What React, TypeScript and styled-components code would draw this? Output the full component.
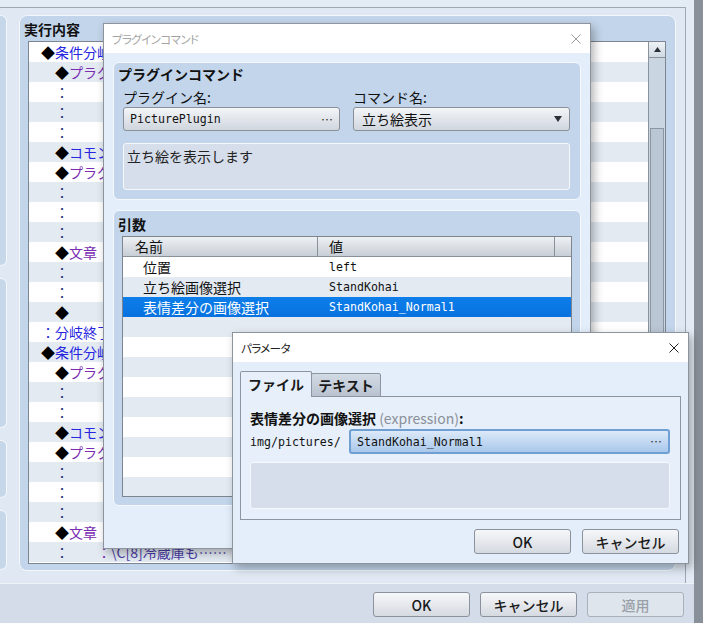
import React from "react";
import styled, { createGlobalStyle } from "styled-components";

const JP = `"Noto Sans CJK JP", "Noto Sans", sans-serif`;
const MONO = `"DejaVu Sans Mono", "Liberation Mono", "Noto Sans CJK JP", monospace`;

const NAVY = "#1e2d7d";
const BLUE = "#2626e0";
const PURPLE = "#7a2db3";

const GlobalStyle = createGlobalStyle`
  html, body { margin: 0; padding: 0; }
  body {
    font-family: ${JP};
    font-size: 14px;
    color: #1a1a1a;
  }
`;

const Screen = styled.div`
  position: relative;
  width: 703px;
  height: 623px;
  overflow: hidden;
  display: flex;
  background: #e3ebf5;
`;

const EditorWindow = styled.div`
  flex: 1;
  display: flex;
  flex-direction: column;
`;

const DarkStrip = styled.div`
  width: 9px;
  background: #8a9099;
`;

const UpperArea = styled.div`
  height: 583px;
  box-sizing: border-box;
  padding: 7px 8px 0 0;
  display: flex;
`;

const Frame = styled.div`
  flex: 1;
  box-sizing: border-box;
  border-top: 1px solid #9ea7b3;
  border-right: 1px solid #9ea7b3;
  background: #dfe8f3;
  display: flex;
  gap: 12px;
  padding: 7px 9px 12px 0;
`;

const SidePanels = styled.div`
  width: 7px;
  display: flex;
  flex-direction: column;
  gap: 12px;
`;

const SidePanel = styled.div<{ $h: number }>`
  height: ${(p) => p.$h}px;
  box-sizing: border-box;
  background: #c6d7ea;
  border: 1px solid #f3f7fc;
  border-left: none;
  border-radius: 0 6px 6px 0;
`;

const ContentsPanel = styled.div`
  flex: 1;
  box-sizing: border-box;
  background: #c3d5ea;
  border: 1px solid #f3f7fc;
  border-radius: 8px;
  padding: 3px 9px 6px 8px;
  display: flex;
  flex-direction: column;
`;

const PanelTitle = styled.div`
  font-weight: 700;
  font-size: 14px;
  line-height: 20px;
  margin: 0 0 2px -4px;
  color: #111;
`;

const CommandList = styled.div`
  flex: 1;
  display: flex;
  border: 1px solid #7d8591;
  background: #fff;
  min-height: 0;
`;

const CommandRows = styled.div`
  flex: 1;
  overflow: hidden;
`;

const CommandRow = styled.div<{ $odd: boolean; $level: number }>`
  height: 20px;
  line-height: 20px;
  white-space: nowrap;
  overflow: hidden;
  font-size: 14px;
  padding-left: ${(p) => p.$level * 14 - 2}px;
  background: ${(p) => (p.$odd ? "#ffffff" : "#e3eaf2")};
`;

const Seg = styled.span<{ $color: string }>`
  color: ${(p) => p.$color};
`;

const VScroll = styled.div`
  width: 16px;
  border-left: 1px solid #8a929c;
  background: #cad5e2;
  display: flex;
  flex-direction: column;
`;

const ScrollArrow = styled.div`
  height: 15px;
  border-bottom: 1px solid #8a929c;
  background: linear-gradient(#eef2f6, #cfd8e2);
  display: flex;
  align-items: center;
  justify-content: center;
`;

const ScrollThumb = styled.div`
  margin: 70px 1px 0 1px;
  height: 380px;
  box-sizing: border-box;
  border: 1px solid #8c96a2;
  background: #bac6d4;
`;

const BottomBar = styled.div`
  flex: 1;
  background: #d3dce8;
  border-top: 1px solid #eef3f8;
  display: flex;
  justify-content: flex-end;
  align-items: flex-start;
  gap: 10px;
  padding: 8px 10px 0 0;
`;

const PushButton = styled.div<{ $disabled?: boolean }>`
  width: 97px;
  height: 25px;
  box-sizing: border-box;
  border: 1px solid ${(p) => (p.$disabled ? "#aab1ba" : "#8c929b")};
  border-radius: 3px;
  background: ${(p) =>
    p.$disabled ? "#dfe5ec" : "linear-gradient(#f6f7f9, #d5dae1)"};
  color: ${(p) => (p.$disabled ? "#9aa0a8" : "#1a1a1a")};
  font-size: 14px;
  font-weight: 500;
  display: flex;
  align-items: center;
  justify-content: center;
  line-height: 1;
`;

const Dialog = styled.div<{ $x: number; $y: number; $w: number; $h: number }>`
  position: absolute;
  left: ${(p) => p.$x}px;
  top: ${(p) => p.$y}px;
  width: ${(p) => p.$w}px;
  height: ${(p) => p.$h}px;
  box-sizing: border-box;
  border: 1px solid #8e949c;
  background: #e4eefa;
  box-shadow: 3px 4px 9px rgba(0, 0, 0, 0.3);
  display: flex;
  flex-direction: column;
`;

const TitleBar = styled.div<{ $active?: boolean }>`
  height: 29px;
  flex: none;
  background: #ffffff;
  display: flex;
  align-items: center;
  justify-content: space-between;
  padding: 0 9px 0 8px;
  font-size: 11.5px;
  letter-spacing: -0.6px;
  font-feature-settings: "palt";
  color: ${(p) => (p.$active ? "#222" : "#a4a4a4")};
`;

const DialogBody = styled.div`
  flex: 1;
  display: flex;
  flex-direction: column;
  gap: 10px;
  padding: 9px 9px 0 9px;
`;

const GroupBox = styled.div<{ $h: number }>`
  height: ${(p) => p.$h}px;
  box-sizing: border-box;
  background: #c2d5ea;
  border: 1px solid #f5f9fd;
  border-radius: 6px;
  padding: 1px 10px 8px 9px;
  display: flex;
  flex-direction: column;
`;

const GroupTitle = styled.div<{ $mt?: number }>`
  font-weight: 700;
  font-size: 14px;
  line-height: 20px;
  margin: ${(p) => p.$mt ?? 0}px 0 0 -5px;
  color: #111;
`;

const FieldGrid = styled.div`
  display: grid;
  grid-template-columns: 217px 217px;
  column-gap: 13px;
  margin-top: 3px;
`;

const FieldLabel = styled.div`
  font-size: 14px;
  line-height: 20px;
  color: #111;
`;

const PickerField = styled.div<{ $focused?: boolean }>`
  height: ${(p) => (p.$focused ? 25 : 24)}px;
  box-sizing: border-box;
  border: ${(p) => (p.$focused ? "2px solid #6f9fd3" : "1px solid #8a9098")};
  border-radius: 3px;
  background: ${(p) =>
    p.$focused
      ? "linear-gradient(#dce9f8, #a9c8ec)"
      : "linear-gradient(#f3f5f8, #d0d6de)"};
  display: flex;
  align-items: center;
  justify-content: space-between;
  padding: 0 6px;
  font-family: ${MONO};
  font-size: 11.6px;
  color: #111;
  flex: 1;
`;

const Ellipsis = styled.span`
  font-family: ${JP};
  font-size: 12px;
  color: #333;
`;

const SelectField = styled(PickerField)`
  font-family: ${JP};
  font-size: 14px;
  padding: 0 7px 0 8px;
`;

const DescBox = styled.div<{ $mt: number }>`
  height: 47px;
  box-sizing: border-box;
  margin-top: ${(p) => p.$mt}px;
  background: #d5deea;
  border: 1px solid #f5f8fc;
  border-radius: 3px;
  padding: 2px 3px;
  font-size: 14px;
  line-height: 20px;
  color: #222;
`;

const ArgTable = styled.div`
  margin: 2px -2px 0 -1px;
  border: 1px solid #7e858f;
  background: #fff;
  flex: 1;
  overflow: hidden;
`;

const HeaderRow = styled.div`
  display: grid;
  grid-template-columns: 195px 237px 1fr;
  height: 20px;
  box-sizing: border-box;
  border-bottom: 1px solid #8a9099;
  background: linear-gradient(#eef1f4, #c8ced6);
`;

const HeaderCell = styled.div<{ $pad: number; $sep?: boolean }>`
  padding-left: ${(p) => p.$pad}px;
  border-right: ${(p) => (p.$sep ? "1px solid #8a9099" : "none")};
  font-size: 14px;
  line-height: 19px;
  color: #111;
`;

const ArgRow = styled.div<{ $tone: "white" | "gray" | "selected" }>`
  display: grid;
  grid-template-columns: 195px 1fr;
  height: 20px;
  line-height: 20px;
  background: ${(p) =>
    p.$tone === "selected"
      ? "linear-gradient(#0d7ee9, #0671df)"
      : p.$tone === "gray"
      ? "#e3eaf2"
      : "#ffffff"};
  color: ${(p) => (p.$tone === "selected" ? "#ffffff" : "#111")};
`;

const ArgName = styled.div`
  padding-left: 20px;
  font-size: 14px;
  white-space: nowrap;
`;

const ArgValue = styled.div`
  padding-left: 11px;
  font-family: ${MONO};
  font-size: 11.6px;
  white-space: nowrap;
`;

const ParamBody = styled.div`
  flex: 1;
  display: flex;
  flex-direction: column;
  padding: 9px 7px 0 7px;
`;

const TabStrip = styled.div`
  display: flex;
  align-items: flex-end;
  height: 26px;
  margin-bottom: -1px;
  position: relative;
  z-index: 1;
`;

const Tab = styled.div<{ $active?: boolean }>`
  box-sizing: border-box;
  width: ${(p) => (p.$active ? 72 : 70)}px;
  height: ${(p) => (p.$active ? 26 : 24)}px;
  border: 1px solid #8c96a2;
  border-bottom: ${(p) => (p.$active ? "none" : "1px solid #8c96a2")};
  margin-left: ${(p) => (p.$active ? 0 : -1)}px;
  border-radius: 2px 2px 0 0;
  background: ${(p) =>
    p.$active ? "#e6effa" : "linear-gradient(#d2dae4, #b9c3cf)"};
  font-size: 14px;
  font-weight: 700;
  display: flex;
  align-items: center;
  justify-content: center;
  padding-bottom: 1px;
  color: #1a1a1a;
`;

const TabPanel = styled.div`
  height: 124px;
  box-sizing: border-box;
  border: 1px solid #8c96a2;
  background: #e6effa;
  padding: 11px 10px 9px 9px;
  display: flex;
  flex-direction: column;
`;

const ParamLabel = styled.div`
  font-size: 14px;
  line-height: 20px;
  font-weight: 700;
  color: #111;
  white-space: nowrap;
`;

const Muted = styled.span`
  font-weight: 400;
  color: #8a9098;
`;

const PathRow = styled.div`
  display: flex;
  align-items: center;
  margin-top: 1px;
`;

const PathPrefix = styled.div`
  width: 99px;
  font-family: ${MONO};
  font-size: 11.6px;
  color: #111;
`;

const ButtonRow = styled.div`
  display: flex;
  justify-content: flex-end;
  gap: 11px;
  margin-top: 9px;
  padding-right: 2px;
`;

function CloseIcon({ color }: { color: string }) {
  return (
    <svg width="10" height="10" viewBox="0 0 10 10">
      <path d="M0.5 0.5L9.5 9.5M9.5 0.5L0.5 9.5" stroke={color} strokeWidth="1" />
    </svg>
  );
}

type Part = { t: string; c: string };
type Line = { lv: number; parts: Part[] };

const cmd = (lv: number, t: string, c: string): Line => ({
  lv,
  parts: [{ t: "◆", c: "#000" }, { t, c }],
});
const cont = (lv: number, t: string, c: string = PURPLE): Line => ({
  lv,
  parts: [{ t: "：", c: NAVY }, { t, c }],
});

// rows of the event list; most of each line sits behind the open dialogs
const lines: Line[] = [
  cmd(1, "条件分岐", BLUE),
  cmd(2, "プラグイン", PURPLE),
  cont(2, ""),
  cont(2, ""),
  cont(2, ""),
  cmd(2, "コモン", BLUE),
  cmd(2, "プラグイン", PURPLE),
  cont(2, ""),
  cont(2, ""),
  cont(2, ""),
  cmd(2, "文章", PURPLE),
  cont(2, ""),
  cont(2, ""),
  cmd(2, "", PURPLE),
  { lv: 1, parts: [{ t: "：分岐終了", c: BLUE }] },
  cmd(1, "条件分岐", BLUE),
  cmd(2, "プラグイン", PURPLE),
  cont(2, ""),
  cont(2, ""),
  cmd(2, "コモン", BLUE),
  cmd(2, "プラグイン", PURPLE),
  cont(2, ""),
  cont(2, ""),
  cont(2, ""),
  cmd(2, "文章", PURPLE),
  {
    lv: 2,
    parts: [
      { t: "：", c: NAVY },
      { t: "　　", c: NAVY },
      { t: "：", c: PURPLE },
      { t: "\\C[8]冷蔵庫も……", c: "#4a3aa6" },
    ],
  },
];

const args = [
  { name: "位置", value: "left" },
  { name: "立ち絵画像選択", value: "StandKohai" },
  { name: "表情差分の画像選択", value: "StandKohai_Normal1" },
];

export default function App() {
  return (
    <>
      <GlobalStyle />
      <Screen>
        <EditorWindow>
          <UpperArea>
            <Frame>
              <SidePanels>
                {[251, 150, 58, 60].map((h) => (
                  <SidePanel key={h} $h={h} />
                ))}
              </SidePanels>
              <ContentsPanel>
                <PanelTitle>実行内容</PanelTitle>
                <CommandList>
                  <CommandRows>
                    {lines.map((l, i) => (
                      <CommandRow key={i} $odd={i % 2 === 0} $level={l.lv}>
                        {l.parts.map((p, j) => (
                          <Seg key={j} $color={p.c}>
                            {p.t}
                          </Seg>
                        ))}
                      </CommandRow>
                    ))}
                  </CommandRows>
                  <VScroll>
                    <ScrollArrow>
                      <svg width="7" height="5" viewBox="0 0 7 5">
                        <path d="M3.5 0L7 5H0Z" fill="#2a2f38" />
                      </svg>
                    </ScrollArrow>
                    <ScrollThumb />
                  </VScroll>
                </CommandList>
              </ContentsPanel>
            </Frame>
          </UpperArea>
          <BottomBar>
            <PushButton>OK</PushButton>
            <PushButton>キャンセル</PushButton>
            <PushButton $disabled>適用</PushButton>
          </BottomBar>
        </EditorWindow>
        <DarkStrip />

        <Dialog $x={103} $y={23} $w={488} $h={526}>
          <TitleBar>
            <span>プラグインコマンド</span>
            <CloseIcon color="#9a9a9a" />
          </TitleBar>
          <DialogBody>
            <GroupBox $h={138}>
              <GroupTitle>プラグインコマンド</GroupTitle>
              <FieldGrid>
                <FieldLabel>プラグイン名:</FieldLabel>
                <FieldLabel>コマンド名:</FieldLabel>
                <PickerField>
                  <span>PicturePlugin</span>
                  <Ellipsis>…</Ellipsis>
                </PickerField>
                <SelectField>
                  <span>立ち絵表示</span>
                  <svg width="8" height="6" viewBox="0 0 8 6">
                    <path d="M0 0H8L4 6Z" fill="#2a2f38" />
                  </svg>
                </SelectField>
              </FieldGrid>
              <DescBox $mt={12}>立ち絵を表示します</DescBox>
            </GroupBox>
            <GroupBox $h={296}>
              <GroupTitle $mt={2}>引数</GroupTitle>
              <ArgTable>
                <HeaderRow>
                  <HeaderCell $pad={12} $sep>
                    名前
                  </HeaderCell>
                  <HeaderCell $pad={11} $sep>
                    値
                  </HeaderCell>
                  <HeaderCell $pad={0} />
                </HeaderRow>
                {Array.from({ length: 12 }).map((_, i) => {
                  const a = args[i];
                  const tone = i === 2 ? "selected" : i % 2 === 0 ? "white" : "gray";
                  return (
                    <ArgRow key={i} $tone={tone}>
                      <ArgName>{a ? a.name : ""}</ArgName>
                      <ArgValue>{a ? a.value : ""}</ArgValue>
                    </ArgRow>
                  );
                })}
              </ArgTable>
            </GroupBox>
          </DialogBody>
        </Dialog>

        <Dialog $x={232} $y={332} $w={457} $h={232}>
          <TitleBar $active>
            <span>パラメータ</span>
            <CloseIcon color="#222" />
          </TitleBar>
          <ParamBody>
            <TabStrip>
              <Tab $active>ファイル</Tab>
              <Tab>テキスト</Tab>
            </TabStrip>
            <TabPanel>
              <ParamLabel>
                表情差分の画像選択<Muted> (expression)</Muted>:
              </ParamLabel>
              <PathRow>
                <PathPrefix>img/pictures/</PathPrefix>
                <PickerField $focused>
                  <span>StandKohai_Normal1</span>
                  <Ellipsis>…</Ellipsis>
                </PickerField>
              </PathRow>
              <DescBox $mt={8} />
            </TabPanel>
            <ButtonRow>
              <PushButton>OK</PushButton>
              <PushButton>キャンセル</PushButton>
            </ButtonRow>
          </ParamBody>
        </Dialog>
      </Screen>
    </>
  );
}
